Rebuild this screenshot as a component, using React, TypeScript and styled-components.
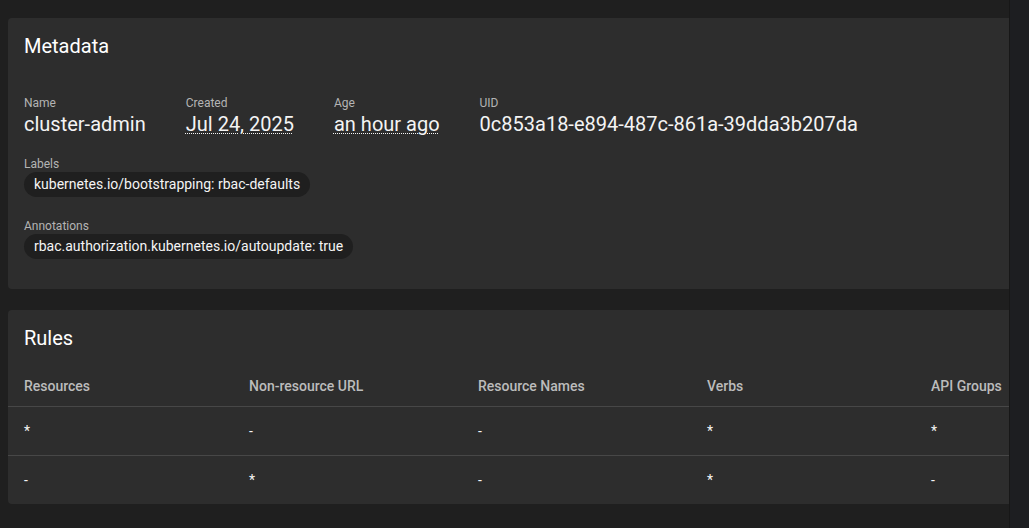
import React from "react";
import styled, { createGlobalStyle } from "styled-components";

const Global = createGlobalStyle`
  html, body { margin: 0; padding: 0; background: #1f1f1f; }
  body { font-family: Roboto, "Liberation Sans", sans-serif; color: #fff; }
  * { box-sizing: border-box; }
`;

const Page = styled.div`
  display: flex;
  width: 1029px;
  height: 528px;
  overflow: hidden;
  background: #1f1f1f;
`;

const Main = styled.main`
  width: 1009px;
  flex: none;
  overflow: hidden;
  padding: 18px 0 0 8px;
  display: flex;
  flex-direction: column;
  gap: 21px;
`;

const Gutter = styled.aside`
  flex: 1;
  background: #1d1e21;
  border-left: 1px solid #171717;
`;

const Card = styled.section<{ $padBottom?: number }>`
  background: #2d2d2d;
  border-radius: 4px;
  margin-right: -40px;
  padding-bottom: ${(p) => p.$padBottom ?? 0}px;
`;

const Title = styled.h2`
  margin: 0;
  padding: 16px 16px 0;
  font-size: 20px;
  line-height: 24px;
  font-weight: 400;
  color: #fff;
`;

const Body = styled.div`
  padding: 36px 16px 0;
  display: flex;
  flex-direction: column;
  gap: 18px;
`;

const FieldRow = styled.div`
  display: flex;
  column-gap: 40px;
  margin-bottom: 1px;
`;

const Field = styled.div`
  display: flex;
  flex-direction: column;
  align-items: flex-start;
`;

const Label = styled.div`
  font-size: 12px;
  line-height: 18px;
  color: #b4b4b4;
`;

const Value = styled.div<{ $dotted?: boolean }>`
  font-size: 20px;
  line-height: 24px;
  color: #f4f4f4;
  text-decoration: ${(p) => (p.$dotted ? "underline dotted" : "none")};
  text-decoration-thickness: 1px;
  text-underline-offset: 2px;
`;

const Chip = styled.span`
  display: inline-block;
  margin: -1px 0 2px;
  background: #1f1f1f;
  border-radius: 13px;
  padding: 3px 10px 4px;
  font-size: 14px;
  line-height: 18px;
  color: #f4f4f4;
`;

const cols = "225px 229px 229px 224px 1fr";

const HeadRow = styled.div`
  display: grid;
  grid-template-columns: ${cols};
  padding-top: 26px;
  border-bottom: 1px solid #474747;
`;

const HeadCell = styled.div`
  padding: 0 16px 10px;
  font-size: 14px;
  line-height: 20px;
  font-weight: 500;
  color: #bcbcbc;
  white-space: nowrap;
`;

const Row = styled.div<{ $last?: boolean }>`
  display: grid;
  grid-template-columns: ${cols};
  border-bottom: ${(p) => (p.$last ? "none" : "1px solid #474747")};
`;

const Cell = styled.div`
  padding: 14px 16px;
  font-size: 14px;
  line-height: 20px;
  color: #f4f4f4;
`;

const headers = ["Resources", "Non-resource URL", "Resource Names", "Verbs", "API Groups"];
const rows = [
  ["*", "-", "-", "*", "*"],
  ["-", "*", "-", "*", "-"],
];

export default function App() {
  return (
    <>
      <Global />
      <Page>
        <Main>
          <Card $padBottom={28}>
            <Title>Metadata</Title>
            <Body>
              <FieldRow>
                <Field>
                  <Label>Name</Label>
                  <Value>cluster-admin</Value>
                </Field>
                <Field>
                  <Label>Created</Label>
                  <Value $dotted>Jul 24, 2025</Value>
                </Field>
                <Field>
                  <Label>Age</Label>
                  <Value $dotted>an hour ago</Value>
                </Field>
                <Field>
                  <Label>UID</Label>
                  <Value>0c853a18-e894-487c-861a-39dda3b207da</Value>
                </Field>
              </FieldRow>
              <Field>
                <Label>Labels</Label>
                <Chip>kubernetes.io/bootstrapping: rbac-defaults</Chip>
              </Field>
              <Field>
                <Label>Annotations</Label>
                <Chip>rbac.authorization.kubernetes.io/autoupdate: true</Chip>
              </Field>
            </Body>
          </Card>
          <Card>
            <Title>Rules</Title>
            <HeadRow>
              {headers.map((h) => (
                <HeadCell key={h}>{h}</HeadCell>
              ))}
            </HeadRow>
            {rows.map((r, i) => (
              <Row key={i} $last={i === rows.length - 1}>
                {r.map((c, j) => (
                  <Cell key={j}>{c}</Cell>
                ))}
              </Row>
            ))}
          </Card>
        </Main>
        <Gutter />
      </Page>
    </>
  );
}
